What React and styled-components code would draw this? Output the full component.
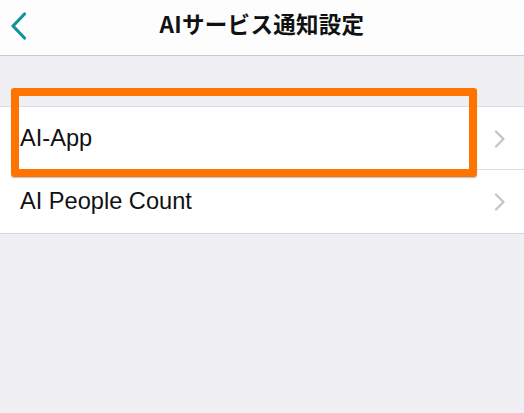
import React from "react";
import styled, { createGlobalStyle } from "styled-components";

const Global = createGlobalStyle`
  html, body { margin: 0; padding: 0; background: #efeff4; }
  body { width: 524px; height: 413px; overflow: hidden; font-family: Inter, "Noto Sans CJK JP", sans-serif; }
`;

const Page = styled.div`
  width: 524px;
  height: 413px;
  background: #efeff4;
  display: flex;
  flex-direction: column;
`;

const Header = styled.header`
  height: 55px;
  background: #fdfdfd;
  border-bottom: 1px solid #c8c7cc;
  display: grid;
  grid-template-columns: 60px 1fr 60px;
  align-items: center;
`;

const BackButton = styled.button`
  border: none;
  background: none;
  padding: 0 0 4px 10px;
  height: 55px;
  display: flex;
  align-items: center;
  cursor: pointer;
`;

const Title = styled.h1`
  margin: 0;
  padding-bottom: 9px;
  text-align: center;
  font-family: "Noto Sans CJK JP", sans-serif;
  font-weight: 700;
  font-size: 22.5px;
  color: #111;
  letter-spacing: 0.3px;
`;

const Group = styled.div`
  position: relative;
  margin-top: 50px;
  background: #fff;
  border-top: 1px solid #dcdce0;
  border-bottom: 1px solid #d6d6da;
`;

const Row = styled.div`
  height: 63px;
  display: flex;
  align-items: center;
  padding: 0 18px 0 20px;
  position: relative;
  ${(p) =>
    p.$divider &&
    `&::after { content: ""; position: absolute; left: 20px; right: 0; bottom: 0; height: 1px; background: #dcdce0; }`}
`;

const Label = styled.span`
  flex: 1;
  font-family: "Liberation Sans", Arial, sans-serif;
  font-size: 23.6px;
  color: #111;
`;

const Highlight = styled.div`
  position: absolute;
  left: 11px;
  top: -19px;
  width: 466px;
  height: 89px;
  box-sizing: border-box;
  border: 8px solid #ff7300;
  border-radius: 3px;
  box-shadow: 0 1px 1px rgba(0, 0, 0, 0.25);
  pointer-events: none;
`;

const Chevron = () => (
  <svg width="12" height="18" viewBox="0 0 12 18">
    <path d="M2 1.5 L9.5 9 L2 16.5" fill="none" stroke="#c4c4c8" strokeWidth="2.2" strokeLinecap="round" strokeLinejoin="round" />
  </svg>
);

const BackIcon = () => (
  <svg width="18" height="28" viewBox="0 0 18 28">
    <path d="M14.5 2 L3 14 L14.5 26" fill="none" stroke="#12939a" strokeWidth="3.2" strokeLinecap="round" strokeLinejoin="round" />
  </svg>
);

export default function App() {
  return (
    <>
      <Global />
      <Page>
        <Header>
          <BackButton aria-label="back">
            <BackIcon />
          </BackButton>
          <Title>AIサービス通知設定</Title>
          <span />
        </Header>
        <Group>
          <Row $divider>
            <Label>AI-App</Label>
            <Chevron />
          </Row>
          <Row>
            <Label>AI People Count</Label>
            <Chevron />
          </Row>
          <Highlight />
        </Group>
      </Page>
    </>
  );
}
